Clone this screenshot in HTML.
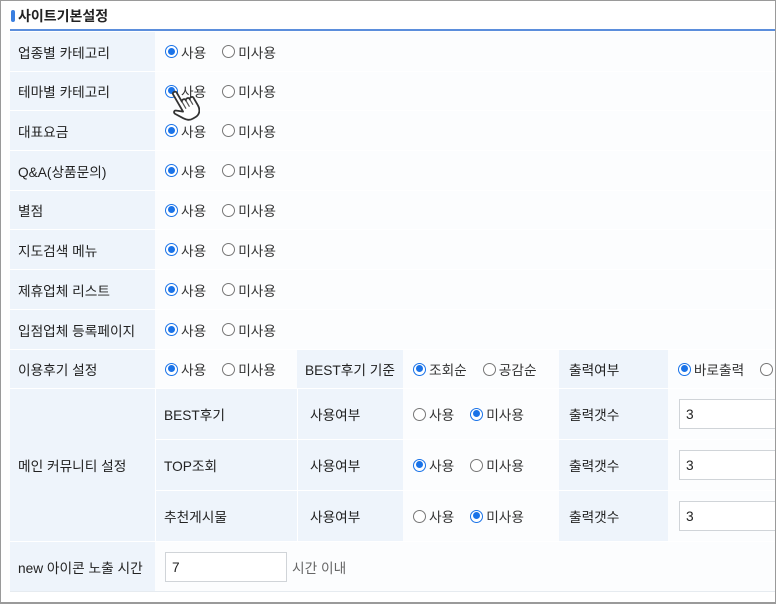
<!DOCTYPE html><html><head><meta charset="utf-8"><style>
*{margin:0;padding:0;box-sizing:border-box}
body{width:776px;height:604px;background:#fff;font-family:"Liberation Sans","Noto Sans CJK KR",sans-serif;font-size:13.7px;color:#222;position:relative;overflow:hidden}
.frame{position:absolute;left:0;top:0;width:776px;height:604px;border:1px solid #9a9a9a;border-bottom:2px solid #9a9a9a}
.c{position:absolute;display:flex;align-items:center;white-space:nowrap}
.l{background:#eef4fb;padding-left:8px}
.v{background:#fcfdfe;padding-left:10px;color:#333}
.r{display:inline-block;width:13px;height:13px;border-radius:50%;border:1px solid #777;background:#fff;margin-right:3px;position:relative}
.r.on{border:1.5px solid #1a73e8}
.r.on::after{content:"";position:absolute;left:1.5px;top:1.5px;width:7px;height:7px;border-radius:50%;background:#1a73e8}
.g{margin-left:16px}
.inp{position:absolute;border:1px solid #d0d4d8;background:#fff;height:30px;display:flex;align-items:center;padding-left:6px}
.sep{position:absolute;left:10px;width:766px;height:1px;background:#e6ebf0}
</style></head><body>
<div class="c" style="left:11px;top:7px;height:18px;font-weight:bold;font-size:14px;color:#222"><span style="display:inline-block;width:4px;height:12px;background:#3a7fe0;border-radius:2px;margin-right:3px"></span>사이트기본설정</div>
<div style="position:absolute;left:10px;top:29px;width:766px;height:2px;background:#5b8edc"></div>

<div class="c l" style="left:10px;top:32px;width:145px;height:39px">업종별 카테고리</div>
<div class="c v" style="left:155px;top:32px;width:621px;height:39px"><span class="r on"></span>사용<span class="r g"></span>미사용</div>
<div class="c l" style="left:10px;top:72px;width:145px;height:38px">테마별 카테고리</div>
<div class="c v" style="left:155px;top:72px;width:621px;height:38px"><span class="r on"></span>사용<span class="r g"></span>미사용</div>
<div class="c l" style="left:10px;top:111px;width:145px;height:39px">대표요금</div>
<div class="c v" style="left:155px;top:111px;width:621px;height:39px"><span class="r on"></span>사용<span class="r g"></span>미사용</div>
<div class="c l" style="left:10px;top:151px;width:145px;height:39px">Q&amp;A(상품문의)</div>
<div class="c v" style="left:155px;top:151px;width:621px;height:39px"><span class="r on"></span>사용<span class="r g"></span>미사용</div>
<div class="c l" style="left:10px;top:191px;width:145px;height:38px">별점</div>
<div class="c v" style="left:155px;top:191px;width:621px;height:38px"><span class="r on"></span>사용<span class="r g"></span>미사용</div>
<div class="c l" style="left:10px;top:230px;width:145px;height:39px">지도검색 메뉴</div>
<div class="c v" style="left:155px;top:230px;width:621px;height:39px"><span class="r on"></span>사용<span class="r g"></span>미사용</div>
<div class="c l" style="left:10px;top:270px;width:145px;height:39px">제휴업체 리스트</div>
<div class="c v" style="left:155px;top:270px;width:621px;height:39px"><span class="r on"></span>사용<span class="r g"></span>미사용</div>
<div class="c l" style="left:10px;top:310px;width:145px;height:39px">입점업체 등록페이지</div>
<div class="c v" style="left:155px;top:310px;width:621px;height:39px"><span class="r on"></span>사용<span class="r g"></span>미사용</div>

<div class="c l" style="left:10px;top:350px;width:145px;height:38px">이용후기 설정</div>
<div class="c v" style="left:155px;top:350px;width:142px;height:38px"><span class="r on"></span>사용<span class="r g"></span>미사용</div>
<div class="c l" style="left:297px;top:350px;width:106px;height:38px">BEST후기 기준</div>
<div class="c v" style="left:403px;top:350px;width:156px;height:38px"><span class="r on"></span>조회순<span class="r g"></span>공감순</div>
<div class="c l" style="left:559px;top:350px;width:109px;height:38px;padding-left:10px">출력여부</div>
<div class="c v" style="left:668px;top:350px;width:108px;height:38px"><span class="r on"></span>바로출력<span class="r g"></span></div>

<div class="c l" style="left:10px;top:389px;width:145px;height:152px">메인 커뮤니티 설정</div>

<div class="c l" style="left:156px;top:389px;width:141px;height:50px">BEST후기</div>
<div class="c l" style="left:298px;top:389px;width:105px;height:50px;padding-left:12px">사용여부</div>
<div class="c v" style="left:403px;top:389px;width:156px;height:50px"><span class="r"></span>사용<span class="r on g"></span>미사용</div>
<div class="c l" style="left:559px;top:389px;width:109px;height:50px;padding-left:10px">출력갯수</div>
<div class="c v" style="left:668px;top:389px;width:108px;height:50px"></div>
<div class="inp" style="left:679px;top:399px;width:100px">3</div>

<div class="c l" style="left:156px;top:440px;width:141px;height:50px">TOP조회</div>
<div class="c l" style="left:298px;top:440px;width:105px;height:50px;padding-left:12px">사용여부</div>
<div class="c v" style="left:403px;top:440px;width:156px;height:50px"><span class="r on"></span>사용<span class="r g"></span>미사용</div>
<div class="c l" style="left:559px;top:440px;width:109px;height:50px;padding-left:10px">출력갯수</div>
<div class="c v" style="left:668px;top:440px;width:108px;height:50px"></div>
<div class="inp" style="left:679px;top:450px;width:100px">3</div>

<div class="c l" style="left:156px;top:491px;width:141px;height:50px">추천게시물</div>
<div class="c l" style="left:298px;top:491px;width:105px;height:50px;padding-left:12px">사용여부</div>
<div class="c v" style="left:403px;top:491px;width:156px;height:50px"><span class="r"></span>사용<span class="r on g"></span>미사용</div>
<div class="c l" style="left:559px;top:491px;width:109px;height:50px;padding-left:10px">출력갯수</div>
<div class="c v" style="left:668px;top:491px;width:108px;height:50px"></div>
<div class="inp" style="left:679px;top:501px;width:100px">3</div>

<div class="c l" style="left:10px;top:542px;width:145px;height:49px">new 아이콘 노출 시간</div>
<div class="c v" style="left:155px;top:542px;width:621px;height:49px"></div>
<div class="inp" style="left:165px;top:552px;width:122px">7</div>
<div class="c" style="left:292px;top:552px;height:30px;color:#666">시간 이내</div>

<div class="sep" style="top:591px"></div>

<svg style="position:absolute;left:170px;top:86px" width="30" height="42" viewBox="0 0 30 42">
<g transform="rotate(-30 15 21)">
<path d="M11 4c0-2 4-2 4 0v11c0-2 4-2 4 0v1c0-2 4-2 4 0v1c0-2 4-2 4 0v9c0 5-3 9-8 9h-3c-4 0-6-2-8-5l-5-8c-1-2 1-4 3-2l5 4V4z" fill="#fff" stroke="#333" stroke-width="1.8" stroke-linejoin="round"/>
<path d="M15 15v8M19 16v7M23 17v6" stroke="#555" stroke-width="1.2"/>
</g>
</svg>

<div class="frame"></div>
</body></html>
